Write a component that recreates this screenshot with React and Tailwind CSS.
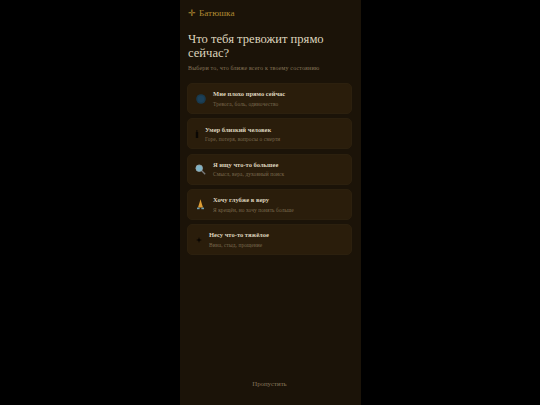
const serif = { fontFamily: '"Liberation Serif", "DejaVu Serif", serif' };

const Moon = () => (
  <svg width="10" height="10" viewBox="0 0 10 10"><circle cx="5" cy="5" r="4.8" fill="#1a3a4e" /><circle cx="5" cy="5" r="3.2" fill="#1c4058" /></svg>
);
const Candle = () => (
  <svg width="4" height="8" viewBox="0 0 4 8"><rect x="1.4" y="0" width="1" height="2" fill="#0a0704" /><rect x="0.8" y="2" width="2.4" height="6" fill="#0a0704" /></svg>
);
const Search = () => (
  <svg width="11" height="11" viewBox="0 0 11 11"><line x1="6.5" y1="6.5" x2="10.2" y2="10.2" stroke="#77797a" strokeWidth="1.3" /><circle cx="4.2" cy="4.2" r="3.3" fill="#7fb4c6" stroke="#98a8ad" strokeWidth="0.8" /></svg>
);
const Pray = () => (
  <svg width="9" height="11" viewBox="0 0 9 11"><path d="M4.5 0.3 L5.6 4 L7 8.6 L2 8.6 L3.4 4 Z" fill="#dd9d34" /><rect x="1" y="8.6" width="2.6" height="1.6" fill="#6fa0b4" /><rect x="5.4" y="8.6" width="2.6" height="1.6" fill="#6fa0b4" /></svg>
);
const Star = () => (
  <svg width="6" height="6" viewBox="0 0 6 6"><path d="M3 0 L3.7 2.3 L6 3 L3.7 3.7 L3 6 L2.3 3.7 L0 3 L2.3 2.3 Z" fill="#070502" /></svg>
);

const items = [
  { icon: <Moon />, w: "w-[10px]", gap: "gap-[7px]", pl: "pl-[8px]", t: "Мне плохо прямо сейчас", s: "Тревога, боль, одиночество" },
  { icon: <Candle />, w: "w-[4px]", gap: "gap-[6px]", pl: "pl-[7px]", t: "Умер близкий человек", s: "Горе, потеря, вопросы о смерти" },
  { icon: <Search />, w: "w-[11px]", gap: "gap-[7px]", pl: "pl-[7px]", t: "Я ищу что-то большее", s: "Смысл, вера, духовный поиск" },
  { icon: <Pray />, w: "w-[9px]", gap: "gap-[8px]", pl: "pl-[8px]", t: "Хочу глубже в веру", s: "Я крещён, но хочу понять больше" },
  { icon: <Star />, w: "w-[6px]", gap: "gap-[7px]", pl: "pl-[8px]", t: "Несу что-то тяжёлое", s: "Вина, стыд, прощение" },
];

export default function App() {
  return (
    <div className="w-[540px] h-[405px] bg-black flex justify-center overflow-hidden antialiased" style={serif}>
      <div className="w-[181px] h-[405px] bg-[#1b1308] flex flex-col pl-[7.5px] pr-[8.5px]">
        <div className="ml-[1px] mt-[7px] h-[12px] flex items-center text-[9.2px] leading-[12px] text-[#b08a32]">
          <span className="mr-[3px]">✛</span>Батюшка
        </div>
        <h1 className="ml-[1px] mt-[13px] text-[12.6px] leading-[14px] font-normal text-[#ddd3bd]">
          Что тебя тревожит прямо
          <br />
          сейчас?
        </h1>
        <p className="ml-[1px] mt-[4px] text-[6px] leading-[8px] text-[#857358] tracking-[0.17px]">
          Выбери то, что ближе всего к твоему состоянию
        </p>
        <div className="mt-[11px] flex flex-col gap-[4.25px]">
          {items.map((it) => (
            <div
              key={it.t}
              className={`h-[31px] rounded-[5px] bg-[#2a1d0b] border border-[#2c200e] flex items-center ${it.pl} ${it.gap}`}
            >
              <div className={`${it.w} flex justify-center shrink-0`}>{it.icon}</div>
              <div className="flex flex-col gap-[2.5px]">
                <div className="text-[6.5px] leading-[9px] font-bold text-[#dcd2bd]">{it.t}</div>
                <div className="text-[5.4px] leading-[7px] text-[#7a6a4f] tracking-[0.1px]">{it.s}</div>
              </div>
            </div>
          ))}
        </div>
        <div className="mt-auto mb-[16px] text-center text-[6.8px] leading-[10px] text-[#85755a]">Пропустить</div>
      </div>
    </div>
  );
}
